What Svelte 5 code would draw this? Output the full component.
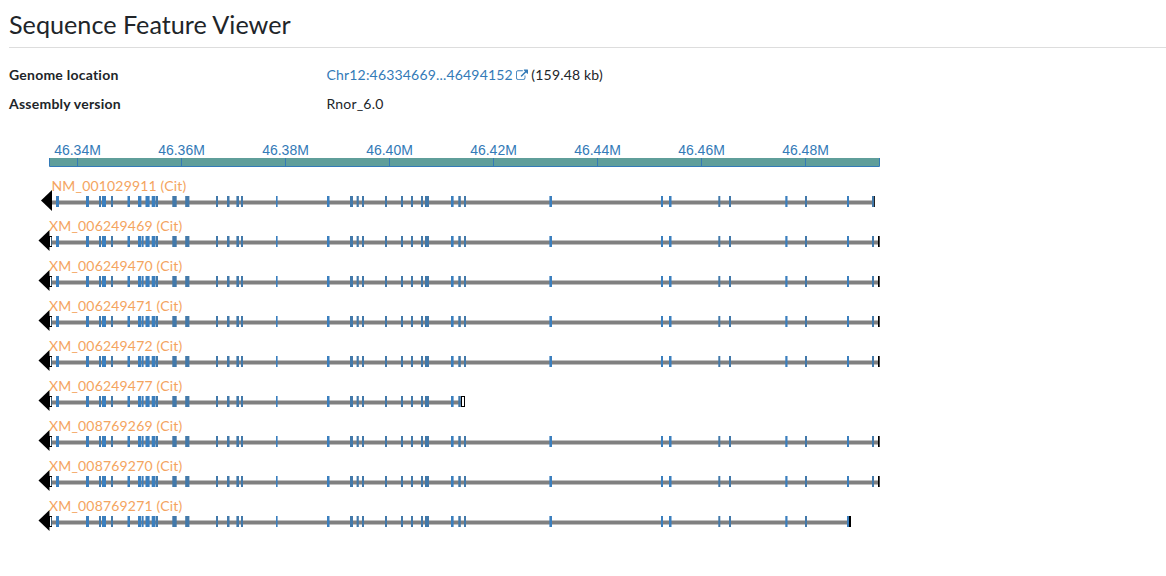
<script>
  const ticks = [
    [77, '46.34M'], [181, '46.36M'], [285, '46.38M'], [389, '46.40M'],
    [493, '46.42M'], [597, '46.44M'], [701, '46.46M'], [805, '46.48M']
  ];
  // [left, width, tone] of each exon on the track
  const exons = [
    [56, 3, 0], [86, 3, 0], [99, 2, 1], [102, 4, 0], [111, 2, 1], [127.5, 2.5, 0],
    [138, 3.4, 0], [142, 1.6, 0], [145.5, 4.1, 0], [151.7, 3.8, 0], [156, 2, 1],
    [172.3, 4.4, 1], [185.2, 4.2, 1], [216, 2, 1], [227, 2.5, 1], [236.4, 2.6, 1],
    [241, 2, 1], [276, 1.6, 0], [327, 2.5, 0], [350, 3, 1], [356.6, 2.2, 1],
    [362, 2, 1], [385, 2, 1], [401, 2, 1], [411, 2, 1], [421, 2, 1], [425, 4, 1],
    [451, 2.6, 0], [458.3, 2.5, 1], [464, 2, 1], [549.4, 2.6, 0], [661, 2, 0],
    [669, 2.5, 0], [718.3, 2, 1], [729, 2, 1], [785.3, 2.2, 0], [805, 2, 1],
    [847, 2, 0], [872, 2, 1]
  ];
  const row = (name, end, start = 49, cap = 'dark') => ({ name, end, start, cap });
  const transcripts = [
    row('NM_001029911', 875, 51.5, 'thin'),
    row('XM_006249469', 880),
    row('XM_006249470', 880),
    row('XM_006249471', 880),
    row('XM_006249472', 880),
    row('XM_006249477', 465, 49, 'open'),
    row('XM_008769269', 880),
    row('XM_008769270', 880),
    row('XM_008769271', 851)
  ];
  const visible = (t) =>
    exons.filter(([x]) => (t.cap === 'thin' ? x < t.end && x !== 142 : x <= t.end - 4));
</script>

<section class="viewer">
  <h3>Sequence Feature Viewer</h3>
  <dl>
    <dt>Genome location</dt>
    <dd>
      <a href="#location">Chr12:46334669...46494152
        <svg class="external" viewBox="0 0 1792 1792" width="12" height="13"><path fill="currentColor" d="M1408 928v320q0 119-84.500 203.500t-203.500 84.500h-832q-119 0-203.500-84.500t-84.500-203.500v-832q0-119 84.500-203.500t203.500-84.500h704q14 0 23 9t9 23v64q0 14-9 23t-23 9h-704q-66 0-113 47t-47 113v832q0 66 47 113t113 47h832q66 0 113-47t47-113v-320q0-14 9-23t23-9h64q14 0 23 9t9 23zm384-864v512q0 26-19 45t-45 19-45-19l-176-176-652 652q-10 10-23 10t-23-10l-114-114q-10-10-10-23t10-23l652-652-176-176q-19-19-19-45t19-45 45-19h512q26 0 45 19t19 45z"/></svg></a>
      (159.48 kb)
    </dd>
    <dt>Assembly version</dt>
    <dd>Rnor_6.0</dd>
  </dl>

  <svg class="tracks" width="900" height="410" viewBox="0 140 900 410">
    <g class="axis">
      <rect x="49" y="158" width="831" height="8" fill="#5f9e9a" />
      <path d="M49.500 158V166.500H879.500V158" fill="none" stroke="#337ab7" />
      {#each ticks as [x, label]}
        <path d="M{x + 0.5} 158v8" stroke="#337ab7" />
        <text x={x + 0.5} y="155" text-anchor="middle">{label}</text>
      {/each}
    </g>
    {#each transcripts as t, i}
      <g transform="translate(0 {i * 40})">
        <text class="name" x={t.start} y="191">{t.name} (Cit)</text>
        <rect x={t.start} y="200" width={t.end - t.start - 1} height="5" fill="#bfbfbf" />
        <rect x={t.start} y="201" width={t.end - t.start - 1} height="3" fill="#808080" />
        {#if t.cap !== 'thin'}
          <rect x="49.500" y="196.500" width="2" height="10" fill="#fff" stroke="#000" />
          <rect x="51" y="197" width="1" height="9" fill="#3f5f7a" />
        {:else}
          <rect x="51" y="196" width="1" height="11" fill="#234a6c" />
        {/if}
        {#each visible(t) as [x, w, tone]}
          <rect {x} y="196" width={w} height="11" fill={tone ? '#4379aa' : '#3b7fbe'} />
        {/each}
        {#if t.cap === 'open'}
          <rect x={t.end - 3.5} y="196.500" width="3" height="10" fill="#fff" stroke="#000" />
        {:else if t.cap === 'thin'}
          <rect x={t.end - 1} y="196" width="1" height="11" fill="#222" />
        {:else}
          <rect x={t.end - 2} y="196" width={t.end < 880 ? 2 : 1.7} height="11" fill="#000" />
        {/if}
        <path d="M{t.start - 10.5} 200.500L{t.start + 0.5} 190V211Z" fill="#000" />
      </g>
    {/each}
  </svg>
</section>

<style>
  :global(body) { background: #fff; overflow: hidden; }
  .viewer { height: 576px; overflow: hidden; font: 14px/20px Lato, sans-serif; color: #212529; }
  h3 { margin: 0 0 0 9px; padding: 7px 0 6px; height: 34px; border-bottom: 1px solid #ddd; font-size: 25.2px; line-height: 34px; font-weight: 400; }
  dl { display: grid; grid-template-columns: 317.5px 1fr; row-gap: 9px; margin: 17px 0 0 9px; letter-spacing: 0.18px; }
  dt { font-weight: 700; letter-spacing: 0.23px; }
  dd { margin: 0; }
  a { color: #337ab7; text-decoration: none; }
  .external { vertical-align: -2px; margin-left: -1px; }
  .tracks { display: block; margin-top: 26px; }
  .axis text { font: 14px "Liberation Sans", Arial, sans-serif; fill: #337ab7; }
  .name { font: 14px Lato, sans-serif; letter-spacing: 0.18px; fill: #f4a460; }
</style>
